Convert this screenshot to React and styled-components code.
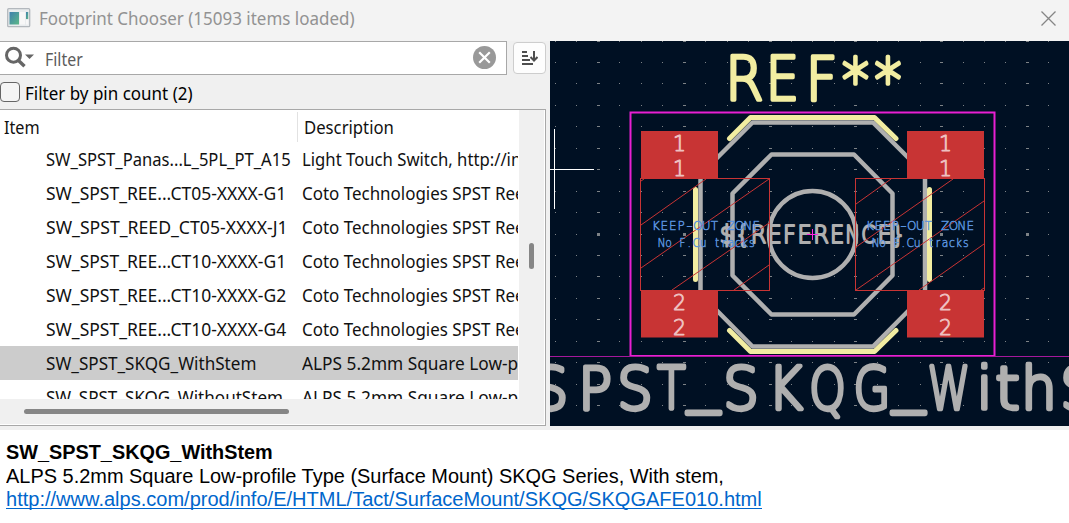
import React from "react";
import styled, { createGlobalStyle, css } from "styled-components";

const Global = createGlobalStyle`
  * { box-sizing: border-box; }
  body { margin: 0; background: #f0f0f0; }
`;

const uiFont = css`
  font-family: "Noto Sans", "Open Sans", sans-serif;
`;

const Window = styled.div`
  width: 1069px;
  height: 523px;
  display: flex;
  flex-direction: column;
  background: #f0f0f0;
  color: #111;
  overflow: hidden;
  ${uiFont}
`;

const TitleBar = styled.header`
  height: 41px;
  flex: none;
  display: flex;
  align-items: center;
  background: #f3f3f3;
  padding: 0 12px 5px 7px;
`;

const Title = styled.h1`
  margin: 0 auto 0 8px;
  font-size: 18px;
  font-weight: 400;
  line-height: 24px;
  color: #929292;
`;

const FitBox = styled.span`
  display: block;
  width: ${(p) => p.$w}px;
  white-space: nowrap;
`;

const FitInner = styled.span`
  display: inline-block;
  transform-origin: 0 50%;
`;

/* Text condensed or widened to an exact run length. */
const Fit = ({ w, children }) => {
  const ref = React.useRef(null);
  const [scale, setScale] = React.useState(1);
  React.useLayoutEffect(() => {
    setScale(w / ref.current.offsetWidth);
  }, [w]);
  return (
    <FitBox $w={w}>
      <FitInner ref={ref} style={{ transform: `scaleX(${scale})` }}>{children}</FitInner>
    </FitBox>
  );
};

const Body = styled.main`
  height: 385px;
  flex: none;
  display: flex;
`;

const Chooser = styled.section`
  width: 550px;
  flex: none;
  display: flex;
  flex-direction: column;
`;

const FilterRow = styled.div`
  display: flex;
  height: 34px;
`;

const SearchBox = styled.div`
  width: 507px;
  height: 34px;
  display: flex;
  align-items: center;
  background: #fff;
  border: 1px solid #a8a8a8;
  border-left: 0;
  padding: 0 9px 0 4px;
`;

const Placeholder = styled.span`
  margin: 1px auto 0 11px;
  font-size: 18px;
  line-height: 24px;
  color: #5c5c5c;
`;

const SortButton = styled.button`
  width: 33px;
  height: 32px;
  margin: 1px 0 0 6px;
  padding: 0 1px 0 0;
  display: flex;
  align-items: center;
  justify-content: center;
  background: #fdfdfd;
  border: 1px solid #cdcdcd;
  border-radius: 4px;
`;

const PinRow = styled.label`
  height: 34px;
  display: flex;
  align-items: center;
  padding-top: 1px;
  font-size: 18px;
  line-height: 24px;
  color: #000;
`;

const CheckBox = styled.span`
  width: 20px;
  height: 20px;
  margin: 0 5px 2px 0;
  background: #f5f5f5;
  border: 1px solid #666;
  border-radius: 4px;
`;

const ListFrame = styled.div`
  width: 546px;
  height: 317px;
  border: 1px solid #a8a8a8;
  border-left: 0;
  display: grid;
  grid-template-columns: 519px 1fr;
  grid-template-rows: 289px 1fr;
  background: #f0f0f0;
  box-shadow: inset -1px -1px 0 #fff;
`;

const Table = styled.div`
  background: #fff;
  overflow: hidden;
  padding-right: 1px;
`;

const cols = css`
  display: grid;
  grid-template-columns: 297px 221px;
  align-items: center;
  font-size: 18px;
  line-height: 24px;
`;

const HeadRow = styled.div`
  ${cols}
  height: 32px;
`;

const HeadCell = styled.div`
  height: 30px;
  margin-top: 2px;
  padding: 3px 0 0 ${(p) => p.$pad}px;
  border-left: ${(p) => (p.$line ? "1px solid #e2e2e2" : "0")};
`;

const Row = styled.div`
  ${cols}
  height: 34px;
  background: ${(p) => (p.$selected ? "#cccccc" : "#fff")};
`;

const Cell = styled.div`
  overflow: hidden;
  padding-left: ${(p) => p.$pad}px;
`;

const VTrack = styled.div`
  padding: 133px 0 0 10px;
`;

const VThumb = styled.div`
  width: 5px;
  height: 26px;
  border-radius: 3px;
  background: #868686;
`;

const HTrack = styled.div`
  grid-column: 1 / 3;
  padding: 10px 0 0 24px;
`;

const HThumb = styled.div`
  width: 265px;
  height: 5px;
  border-radius: 3px;
  background: #868686;
`;

const Canvas = styled.svg`
  display: block;
  width: 519px;
  height: 385px;
  background: #001023;
`;

const Details = styled.footer`
  margin-top: 4px;
  flex: 1;
  background: #fff;
  padding: 10px 6px 0;
  font-family: "Liberation Sans", Arial, sans-serif;
  font-size: 20px;
  line-height: 24px;
  color: #000;
`;

const Name = styled.strong`
  font-weight: 700;
`;

const Link = styled.a`
  display: block;
  width: 756px;
  height: 21px;
  line-height: 22px;
  color: #0066cc;
  border-bottom: 1px solid #0066cc;
`;

const AppIcon = () => (
  <svg width="24" height="20" viewBox="0 0 24 20">
    <defs>
      <linearGradient id="pane" x1="0" y1="0" x2="1" y2="1">
        <stop offset="0" stopColor="#3f7fae" />
        <stop offset="1" stopColor="#5cb887" />
      </linearGradient>
    </defs>
    <rect x="0.7" y="0.7" width="22" height="18" rx="1" fill="#e9ecee" stroke="#b3b8bd" strokeWidth="1.3" />
    <rect x="2.5" y="4" width="9.5" height="12.5" fill="url(#pane)" />
    <rect x="13" y="4" width="5" height="12.5" fill="#f7f7f7" />
    <rect x="19" y="4" width="2.2" height="7" fill="url(#pane)" />
    <rect x="19" y="12" width="2.2" height="4.5" fill="#f7f7f7" />
  </svg>
);

const CloseIcon = () => (
  <svg width="17" height="17" viewBox="0 0 17 17" stroke="#858585" strokeWidth="1.3">
    <path d="M1.500 1.500L15.500 15.500M15.500 1.500L1.500 15.500" />
  </svg>
);

const SearchIcon = () => (
  <svg width="30" height="24" viewBox="0 0 30 24">
    <circle cx="9.5" cy="9.200" r="7" fill="none" stroke="#666" strokeWidth="3" />
    <path d="M14.500 14.500L20.500 20.300" stroke="#666" strokeWidth="3.4" />
    <path d="M21 8.500h9l-4.500 4.500z" fill="#666" />
  </svg>
);

const ClearIcon = () => (
  <svg width="24" height="24" viewBox="0 0 24 24">
    <circle cx="11.500" cy="11.500" r="11.500" fill="#999" />
    <path d="M6.200 6.200l10.600 10.600M16.800 6.200L6.200 16.800" stroke="#fff" strokeWidth="2.2" />
  </svg>
);

const SortIcon = () => (
  <svg width="17" height="16" viewBox="0 0 17 16" stroke="#4d4d4d" fill="none">
    <path d="M1 2h5M1 6h6M1 10h8M1 14h11" strokeWidth="2" />
    <path d="M13 1v9M9.500 7l3.500 3.500L16.500 7" strokeWidth="2" />
  </svg>
);

const rows = [
  ["SW_SPST_Panas...L_5PL_PT_A15", 245, "Light Touch Switch, http://in", 219],
  ["SW_SPST_REE...CT05-XXXX-G1", 240, "Coto Technologies SPST Ree", 223],
  ["SW_SPST_REED_CT05-XXXX-J1", 242, "Coto Technologies SPST Ree", 223],
  ["SW_SPST_REE...CT10-XXXX-G1", 240, "Coto Technologies SPST Ree", 223],
  ["SW_SPST_REE...CT10-XXXX-G2", 240, "Coto Technologies SPST Ree", 223],
  ["SW_SPST_REE...CT10-XXXX-G4", 240, "Coto Technologies SPST Ree", 223],
  ["SW_SPST_SKQG_WithStem", 210, "ALPS 5.2mm Square Low-p", 216],
  ["SW_SPST_SKQG_WithoutStem", 237, "ALPS 5.2mm Square Low-p", 216],
];

const Glyphs = styled.text`
  font-family: "DejaVu Sans", sans-serif;
  font-weight: 200;
  font-size: ${(p) => p.$size}px;
  fill: ${(p) => p.$color};
  stroke: ${(p) => p.$color};
  stroke-width: ${(p) => p.$stroke};
  stroke-linejoin: round;
  stroke-linecap: round;
  text-anchor: middle;
`;

/* Each entry is [character, centre x, horizontal scale, vertical shift]. */
const Lettering = ({ chars, y, size, sx = 1, color, stroke }) =>
  chars.map(([ch, x, own, dy = 0], i) => (
    <Glyphs
      key={i}
      $size={size}
      $color={color}
      $stroke={stroke}
      transform={`translate(${x} ${y + dy}) scale(${own || sx} 1)`}
    >
      {ch}
    </Glyphs>
  ));

const spread = (text, x0, step) =>
  [...text].map((c, i) => [c, x0 + i * step]).filter(([c]) => c !== " ");

const gridX = Array.from({ length: 25 }, (_, i) => 555.5 + i * 21.45);
const gridY = Array.from({ length: 19 }, (_, i) => 41 + i * 21.45);

const Pad = ({ x, y, n }) => (
  <g>
    <rect x={x} y={y} width="77" height="47.500" fill="#c83434" />
    {[20, 45].map((dy) => (
      <Glyphs key={dy} $size={20.500} $color="#eec0c0" $stroke={0.9} x={x + 38.5} y={y + dy - 0.5}>{n}</Glyphs>
    ))}
  </g>
);

const Board = () => (
  <Canvas viewBox="550 41 519 385">
    <g shapeRendering="crispEdges">
      {gridX.map((x, i) =>
        gridY.map((y, j) => {
          const w = i % 4 === 2 ? 3 : 1;
          const h = w === 3 && j === 9 ? 3 : 1;
          return <rect key={`${i}-${j}`} x={Math.floor(x - (w - 1) / 2)} y={Math.floor(y - (h - 1) / 2)} width={w} height={h} fill="#7d8286" />;
        })
      )}
    </g>

    <Lettering
      chars={[["S", 550.500], ["P", 595], ["S", 635], ["T", 671.500, 0.78], ["_", 703.500, 1.08, -9.500], ["S", 741], ["K", 785.500, 0.88], ["Q", 827.500, 0.78], ["G", 872, 0.8], ["_", 908.500, 1.08, -9.500], ["W", 949, 0.72], ["i", 984.500], ["t", 1007.500, 1.05], ["h", 1039], ["S", 1078]]}
      y={409} size={59.500} sx={0.94} color="#afafaf" stroke={4.3}
    />

    <g fill="none" stroke="#afafaf" strokeWidth="4.500" strokeLinejoin="round">
      <path d="M752.500 122.500H873L925 174.500V294L873 346.500H752.500L700.500 294V174.500Z" />
      <path d="M771.500 154.500H854L892.500 193.500V275.500L854 314.500H771.500L732.500 275.500V193.500Z" />
      <circle cx="812.500" cy="234.500" r="43.500" />
    </g>
    <g fill="none" stroke="#f2eda1" strokeWidth="5" strokeLinecap="round" strokeLinejoin="round">
      <path d="M729.500 138.500L750.500 117.500H874.500L896 138.500M729.500 330.500L750.500 351.500H874.500L896 330.500" />
      <path d="M695.500 189.500V279.500M929.500 189.500V279.500" />
    </g>

    <Lettering
      chars={[["R", 744.500, 0.92], ["E", 782.500, 0.88], ["F", 821.500, 0.92], ["*", 855.500, 0.9, 1.500], ["*", 888, 0.9, 1.500]]}
      y={99.500} size={60} sx={0.94} color="#f2eda1" stroke={3.6}
    />

    <Lettering
      chars={[["$", 727], ["{", 742.500], ["R", 758.500], ["E", 774.500], ["F", 789.500], ["E", 804.500], ["R", 821], ["E", 837], ["N", 852.500, 0.8], ["C", 868.500, 0.85], ["E", 884.500], ["}", 898.500]]}
      y={243} size={24.500} sx={0.92} color="#afafaf" stroke={2}
    />

    <g fill="none" stroke="#c83434" strokeWidth="1">
      <g shapeRendering="crispEdges">
        <rect x="640.500" y="178.500" width="129" height="112" />
        <rect x="855.500" y="178.500" width="129" height="112" />
      </g>
      <path d="M641 181L644 179M641 225L706 179M641 268L769 179M672 290L769 223M734 290L769 265" />
      <path d="M856 204L891 179M856 247L953 179M856 290L984 201M919 290L984 244M981 290L984 288" />
    </g>

    <Pad x={641} y={131} n="1" />
    <Pad x={907} y={131} n="1" />
    <Pad x={641} y={290} n="2" />
    <Pad x={907} y={290} n="2" />

    {[652, 866].map((x) => (
      <g key={x}>
        <Lettering chars={spread("KEEP–OUT ZONE", x + 4, 8.350)} y={230} size={12.500} sx={0.96} color="#5b93dd" stroke={0.5} />
        <Lettering chars={spread("No F.Cu tracks", x + 9.500, 6.950)} y={247} size={12} sx={0.9} color="#5b93dd" stroke={0.5} />
      </g>
    ))}

    <rect x="630.500" y="112.500" width="364" height="243.500" fill="none" stroke="#e81fd2" strokeWidth="2" />
    <path d="M550 356.500H1069" stroke="#a5189b" />
    <path d="M807 234.500H818M812.500 229V240" stroke="#ff26e2" />
    <path d="M550 169.500H594M554.500 129V209" stroke="#fff" shapeRendering="crispEdges" />
  </Canvas>
);

export default function App() {
  return (
    <Window>
      <Global />
      <TitleBar>
        <AppIcon />
        <Title><Fit w={316}>Footprint Chooser (15093 items loaded)</Fit></Title>
        <CloseIcon />
      </TitleBar>
      <Body>
        <Chooser>
          <FilterRow>
            <SearchBox>
              <SearchIcon />
              <Placeholder><Fit w={38}>Filter</Fit></Placeholder>
              <ClearIcon />
            </SearchBox>
            <SortButton aria-label="Sort"><SortIcon /></SortButton>
          </FilterRow>
          <PinRow>
            <CheckBox />
            <Fit w={168}>Filter by pin count (2)</Fit>
          </PinRow>
          <ListFrame>
            <Table>
              <HeadRow>
                <HeadCell $pad={4}><Fit w={36}>Item</Fit></HeadCell>
                <HeadCell $pad={6} $line><Fit w={90}>Description</Fit></HeadCell>
              </HeadRow>
              {rows.map(([name, nw, desc, dw], i) => (
                <Row key={i} $selected={i === 6}>
                  <Cell $pad={46}><Fit w={nw}>{name}</Fit></Cell>
                  <Cell $pad={5}><Fit w={dw}>{desc}</Fit></Cell>
                </Row>
              ))}
            </Table>
            <VTrack><VThumb /></VTrack>
            <HTrack><HThumb /></HTrack>
          </ListFrame>
        </Chooser>
        <Board />
      </Body>
      <Details>
        <Name><Fit w={267}>SW_SPST_SKQG_WithStem</Fit></Name>
        <Fit w={718}>ALPS 5.2mm Square Low-profile Type (Surface Mount) SKQG Series, With stem,</Fit>
        <Link><Fit w={756}>http://www.alps.com/prod/info/E/HTML/Tact/SurfaceMount/SKQG/SKQGAFE010.html</Fit></Link>
      </Details>
    </Window>
  );
}
